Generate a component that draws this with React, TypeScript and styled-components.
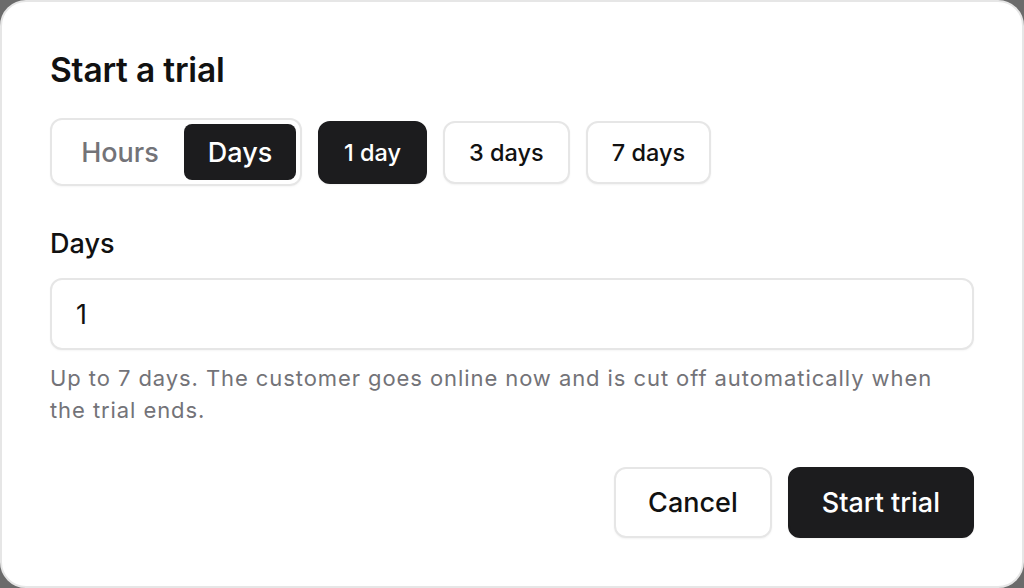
import React, { useState } from "react";
import styled, { createGlobalStyle } from "styled-components";

const Global = createGlobalStyle`
  html, body { margin: 0; padding: 0; background: #6b6b6b; }
  body { font-family: Inter, "Noto Sans", "Liberation Sans", sans-serif; -webkit-font-smoothing: antialiased; }
  * { box-sizing: border-box; }
`;

const Dialog = styled.div`
  width: 1024px;
  height: 588px;
  background: #ffffff;
  border: 2px solid #e6e6e6;
  border-radius: 26px;
  padding: 48px;
  display: flex;
  flex-direction: column;
  color: #111111;
`;

const Title = styled.h1`
  margin: 0;
  font-size: 33.5px;
  line-height: 40px;
  font-weight: 600;
  letter-spacing: -0.2px;
  color: #111111;
`;

const ModeRow = styled.div`
  display: flex;
  align-items: center;
  gap: 16px;
  margin-top: 28px;
  height: 68px;
`;

const Segmented = styled.div`
  display: flex;
  padding: 4px;
  border: 2px solid #e6e6e6;
  border-radius: 12px;
  height: 68px;
  box-shadow: 0 1px 2px rgba(0, 0, 0, 0.04);
`;

const SegButton = styled.button<{ $active?: boolean; $w: number }>`
  width: ${(p) => p.$w}px;
  height: 56px;
  border: none;
  border-radius: 8px;
  font-family: inherit;
  font-size: 27px;
  font-weight: 500;
  background: ${(p) => (p.$active ? "#1c1c1e" : "transparent")};
  color: ${(p) => (p.$active ? "#ffffff" : "#737378")};
  cursor: pointer;
  padding: 0;
`;

const Preset = styled.button<{ $active?: boolean }>`
  height: 63px;
  padding: 0 24px;
  border-radius: 12px;
  border: 2px solid ${(p) => (p.$active ? "#1c1c1e" : "#e6e6e6")};
  background: ${(p) => (p.$active ? "#1c1c1e" : "#ffffff")};
  color: ${(p) => (p.$active ? "#ffffff" : "#111111")};
  font-family: inherit;
  font-size: 23.5px;
  font-weight: 500;
  cursor: pointer;
  box-shadow: 0 1px 2px rgba(0, 0, 0, 0.05);
`;

const Field = styled.div`
  display: flex;
  flex-direction: column;
  margin-top: 42px;
`;

const Label = styled.label`
  font-size: 27px;
  line-height: 32px;
  font-weight: 500;
  color: #111111;
`;

const Input = styled.input`
  margin-top: 18px;
  height: 72px;
  width: 100%;
  border: 2px solid #e6e6e6;
  border-radius: 12px;
  padding: 0 24px;
  font-family: inherit;
  font-size: 27px;
  color: #111111;
  outline: none;
  box-shadow: 0 1px 2px rgba(0, 0, 0, 0.04);
`;

const Help = styled.p`
  margin: 12px 0 0;
  font-size: 22px;
  line-height: 32px;
  color: #737378;
  letter-spacing: 0.92px;
  max-width: 900px;
`;

const Footer = styled.div`
  display: flex;
  justify-content: flex-end;
  gap: 16px;
  margin-top: auto;
`;

const ActionButton = styled.button<{ $primary?: boolean }>`
  height: 71px;
  padding: 0 32px;
  border-radius: 12px;
  border: 2px solid ${(p) => (p.$primary ? "#1c1c1e" : "#e6e6e6")};
  background: ${(p) => (p.$primary ? "#1c1c1e" : "#ffffff")};
  color: ${(p) => (p.$primary ? "#ffffff" : "#111111")};
  font-family: inherit;
  font-size: 27px;
  font-weight: 500;
  cursor: pointer;
  box-shadow: 0 1px 2px rgba(0, 0, 0, 0.05);
`;

export default function App() {
  const [mode, setMode] = useState<"hours" | "days">("days");
  const [preset, setPreset] = useState(1);
  const [value, setValue] = useState("1");
  return (
    <>
      <Global />
      <Dialog>
        <Title>Start a trial</Title>
        <ModeRow>
          <Segmented>
            <SegButton $w={128} $active={mode === "hours"} onClick={() => setMode("hours")}>
              Hours
            </SegButton>
            <SegButton $w={112} $active={mode === "days"} onClick={() => setMode("days")}>
              Days
            </SegButton>
          </Segmented>
          {[1, 3, 7].map((d) => (
            <Preset
              key={d}
              $active={preset === d}
              onClick={() => {
                setPreset(d);
                setValue(String(d));
              }}
            >
              {d === 1 ? "1 day" : `${d} days`}
            </Preset>
          ))}
        </ModeRow>
        <Field>
          <Label>Days</Label>
          <Input value={value} onChange={(e) => setValue(e.target.value)} />
          <Help>
            Up to 7 days. The customer goes online now and is cut off automatically when the trial ends.
          </Help>
        </Field>
        <Footer>
          <ActionButton>Cancel</ActionButton>
          <ActionButton $primary>Start trial</ActionButton>
        </Footer>
      </Dialog>
    </>
  );
}
